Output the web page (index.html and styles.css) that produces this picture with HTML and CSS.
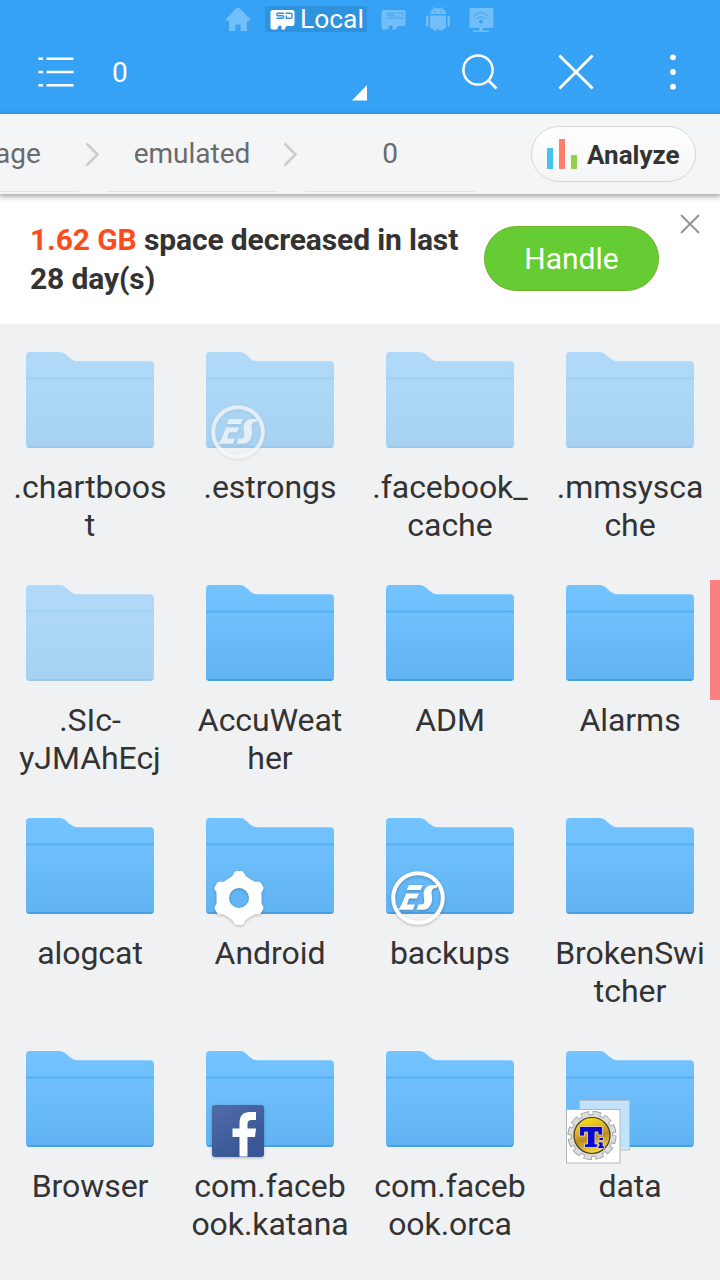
FILE: index.html
```html
<!DOCTYPE html>
<html lang="en">
<head>
<meta charset="utf-8">
<title>File explorer</title>
<link rel="stylesheet" href="styles.css">
</head>
<body>
<svg class="defs" width="0" height="0" aria-hidden="true">
  <defs>
    <linearGradient id="folder-fill" x1="0" y1="0" x2="0" y2="1">
      <stop offset="0" stop-color="#73c3ff"/><stop offset=".4" stop-color="#6dbefb"/><stop offset="1" stop-color="#60b3f1"/>
    </linearGradient>
    <clipPath id="folder-clip"><path d="M0 4Q0 0 4 0H34C41 0 43 9.300 52 9.300H124Q128 9.300 128 13.300V92Q128 96 124 96H4Q0 96 0 92Z"/></clipPath>
    <symbol id="folder" viewBox="0 0 128 96">
      <g clip-path="url(#folder-clip)">
        <rect width="128" height="96" fill="url(#folder-fill)"/>
        <rect y="25.500" width="128" height="2" fill="#56b0f0"/>
        <rect y="94" width="128" height="2" fill="#4a9fe0"/>
      </g>
    </symbol>
    <symbol id="sd" viewBox="0 0 25 21">
      <path fill="currentColor" stroke="none" d="M2.500 0H22.500Q24.500 0 24.500 2V13.500Q24.500 16 22.500 16H17Q16 16 15.500 17.500L14.500 19.500H11.500V16.500Q11.500 15.500 10.500 15.500H9.500Q8.500 15.500 8 17L7 19.500H2.500Q.5 19.500 .5 17.500V2Q.5 0 2.500 0Z"/>
      <path fill="none" stroke-width="1.400" d="M14 3.300H8Q6.800 3.300 6.800 4.500T8 5.700H12.500Q13.700 5.700 13.700 7T12.500 8.300H6.500M16.300 5.500V8.300H20.500Q22 8.300 22 7V4.700Q22 3.300 20.500 3.300H15.500"/>
    </symbol>
    <symbol id="es" viewBox="0 0 54 54">
      <circle cx="27" cy="27" r="24.800" fill="none" stroke="#fff" stroke-width="4"/>
      <g fill="#fff">
        <path d="M18 14H32L29.500 19H15.500ZM15 22.500H28L25.700 27.500H18L16 33.500H24L22 38.700H6.500Q10 36 12 30Z"/>
        <path d="M47 14L45.500 17Q42 16.500 41 19Q40 21.500 41 25C42 33 38 38.700 32 38.700H25.500L27.300 33.500H30C34 33.500 33.500 30 32.800 26C31.500 18 36 14 41 14Z"/>
      </g>
    </symbol>
  </defs>
</svg>
<div class="app">
  <header class="header">
    <nav class="tabs">
      <svg class="tab-icon home" width="26" height="26" viewBox="0 0 26 26"><path fill="currentColor" d="M13 .5Q14 .5 15 1.500L25 12Q25 14 23.500 14H22V24H15.500V17.500H10.500V24H4V14H2.500Q.8 14 1 12L11 1.500Q12 .5 13 .5Z"/></svg>
      <div class="tab-active"><svg class="sd" width="25" height="21"><use href="#sd"/></svg><span>Local</span></div>
      <svg class="tab-icon sd faded" width="25" height="21"><use href="#sd"/></svg>
      <svg class="tab-icon android" width="24" height="24" viewBox="0 0 24 24"><path fill="currentColor" fill-rule="evenodd" d="M4 7Q4.500 3 8 2L6.500.5L7.500 0L9.200 1.500Q12 .8 14.800 1.500L16.500 0L17.500.5L16 2Q19.500 3 20 7ZM8 4V5.500H9.500V4ZM14.500 4V5.500H16V4ZM4 8.500H20V20Q20 22 18 22H17V23.500H13V22H11V23.500H7V22H6Q4 22 4 20ZM0 10Q0 8.500 1.200 8.500T2.500 10V18Q2.500 19.500 1.200 19.500T0 18ZM21.500 10Q21.500 8.500 22.700 8.500T24 10V18Q24 19.500 22.700 19.500T21.500 18Z"/></svg>
      <svg class="tab-icon cast" width="25" height="25" viewBox="0 0 25 25"><path fill="currentColor" d="M2 0H23Q24.500 0 24.500 1.500V18.500Q24.500 20 23 20H14V22.500H20V24H4V22.500H10.500V20H2Q.5 20 .5 18.500V1.500Q.5 0 2 0Z"/><g fill="none" stroke="#4fadf6" stroke-width="1.500"><path d="M4.500 8.500Q12 1 19.500 8.500M7.500 11Q12 6.500 16.500 11"/></g><circle cx="12" cy="13.500" r="2" fill="#36a2f5"/></svg>
    </nav>
    <div class="toolbar">
      <svg class="menu" width="36" height="32" viewBox="0 0 36 32"><path stroke="#fff" stroke-width="2.600" d="M.5 2.700H5M8.500 2.700H35.500M.5 16H5M8.500 16H35.500M.5 29.300H5M8.500 29.300H35.500"/></svg>
      <span class="folder-title">0</span>
      <svg class="corner" width="16" height="16" viewBox="0 0 16 16"><path fill="#fff" d="M15 0V15.500H0Z"/></svg>
      <svg class="search" width="36" height="36" viewBox="0 0 36 36"><circle cx="16" cy="16" r="14.600" fill="none" stroke="#fff" stroke-width="2.500"/><path stroke="#fff" stroke-width="2.700" d="M26.500 26.500L34.500 34.500"/></svg>
      <svg class="close" width="36" height="36" viewBox="0 0 36 36"><path stroke="#fff" stroke-width="2.800" d="M1.400 1.400L34.600 34.600M34.600 1.400L1.400 34.600"/></svg>
      <svg class="more" width="8" height="36" viewBox="0 0 8 36"><g fill="#fff"><circle cx="4" cy="3.300" r="2.900"/><circle cx="4" cy="18" r="2.900"/><circle cx="4" cy="32.700" r="2.900"/></g></svg>
    </div>
  </header>

  <div class="path">
    <span class="crumb first">age</span>
    <svg class="sep" width="28" height="80" viewBox="0 0 28 80"><path fill="none" stroke="#cbcccd" stroke-width="2.600" d="M7.500 29.500L18.500 40.500L7.500 51.500"/></svg>
    <span class="crumb">emulated</span>
    <svg class="sep" width="28" height="80" viewBox="0 0 28 80"><path fill="none" stroke="#cbcccd" stroke-width="2.600" d="M7.500 29.500L18.500 40.500L7.500 51.500"/></svg>
    <span class="crumb">0</span>
    <button class="analyze">
      <svg width="30" height="30" viewBox="0 0 30 30"><rect y="9" width="6" height="21" rx=".8" fill="#46c2ee"/><rect x="12" width="6" height="30" rx=".8" fill="#ff806a"/><rect x="24" y="16" width="6" height="14" rx=".8" fill="#94ce4d"/></svg>
      <span class="analyze-label">Analyze</span>
    </button>
  </div>

  <section class="notice">
    <p class="notice-text"><span class="size">1.62 GB</span> space decreased in last<br>28 day(s)</p>
    <button class="handle">Handle</button>
    <svg class="dismiss" width="20" height="20" viewBox="0 0 20 20"><path stroke="#999" stroke-width="2.200" d="M1 1L19 19M19 1L1 19"/></svg>
  </section>

  <main class="grid">
    <div class="item hidden"><div class="icon"><svg class="folder"><use href="#folder"/></svg></div><span>.chartboos<br>t</span></div>
    <div class="item hidden"><div class="icon"><svg class="folder"><use href="#folder"/></svg><svg class="badge es"><use href="#es"/></svg></div><span>.estrongs</span></div>
    <div class="item hidden"><div class="icon"><svg class="folder"><use href="#folder"/></svg></div><span>.facebook_<br>cache</span></div>
    <div class="item hidden"><div class="icon"><svg class="folder"><use href="#folder"/></svg></div><span>.mmsysca<br>che</span></div>

    <div class="item hidden"><div class="icon"><svg class="folder"><use href="#folder"/></svg></div><span>.SIc-<br>yJMAhEcj</span></div>
    <div class="item"><div class="icon"><svg class="folder"><use href="#folder"/></svg></div><span>AccuWeat<br>her</span></div>
    <div class="item"><div class="icon"><svg class="folder"><use href="#folder"/></svg></div><span>ADM</span></div>
    <div class="item"><div class="icon"><svg class="folder"><use href="#folder"/></svg></div><span>Alarms</span></div>

    <div class="item"><div class="icon"><svg class="folder"><use href="#folder"/></svg></div><span>alogcat</span></div>
    <div class="item"><div class="icon"><svg class="folder"><use href="#folder"/></svg>
      <svg class="badge gear" viewBox="0 0 50 54"><path fill="#fff" fill-rule="evenodd" d="M22 0H28Q30 1 31 4L33 6L40 10.500Q42 11 44 10.500Q46 10.500 47 12L49.500 16.500Q50 18 48 20.500L47.500 22V32L48 33.500Q50 36 49.500 37.500L47 42Q46 43.500 44 43.500Q42 43 40 43.500L33 48L31 50Q30 53 28 54H22Q20 53 19 50L17 48L10 43.500Q8 43 6 43.500Q4 43.500 3 42L.5 37.500Q0 36 2 33.500L2.500 32V22L2 20.500Q0 18 .5 16.500L3 12Q4 10.500 6 10.500Q8 11 10 10.500L17 6L19 4Q20 1 22 0ZM25 17A10 10 0 1 0 25 37A10 10 0 1 0 25 17Z"/></svg></div><span>Android</span></div>
    <div class="item"><div class="icon"><svg class="folder"><use href="#folder"/></svg><svg class="badge es"><use href="#es"/></svg></div><span>backups</span></div>
    <div class="item"><div class="icon"><svg class="folder"><use href="#folder"/></svg></div><span>BrokenSwi<br>tcher</span></div>

    <div class="item"><div class="icon"><svg class="folder"><use href="#folder"/></svg></div><span>Browser</span></div>
    <div class="item"><div class="icon"><svg class="folder"><use href="#folder"/></svg>
      <svg class="badge fb" viewBox="0 0 52 52"><defs><linearGradient id="fb-fill" x1="0" y1="0" x2=".6" y2="1"><stop offset="0" stop-color="#506da8"/><stop offset="1" stop-color="#385594"/></linearGradient></defs><rect width="52" height="52" rx="3" fill="url(#fb-fill)"/><path fill="#fff" d="M27.500 51.500V32H20.500V23.500H27.500V18Q27.500 7 38 7H44V15H39.500Q35.500 15 35.500 19V23.500H44L43 32H35.500V51.500Z"/></svg></div><span>com.faceb<br>ook.katana</span></div>
    <div class="item"><div class="icon"><svg class="folder"><use href="#folder"/></svg></div><span>com.faceb<br>ook.orca</span></div>
    <div class="item"><div class="icon"><svg class="folder"><use href="#folder"/></svg>
      <svg class="badge ti" viewBox="0 0 64 64"><defs><linearGradient id="gold" x1="0" y1="0" x2=".3" y2="1"><stop offset="0" stop-color="#fff000"/><stop offset=".4" stop-color="#e0b52a"/><stop offset=".65" stop-color="#b98b22"/><stop offset="1" stop-color="#f0d040"/></linearGradient></defs>
        <rect x="13.500" y=".5" width="50" height="49.500" fill="#cce7fc" fill-opacity=".9" stroke="#b4bfc8"/>
        <rect x=".5" y="9.500" width="53.500" height="53.500" fill="#fff" stroke="#b4b7ba"/>
        <circle cx="26" cy="35.500" r="22" fill="none" stroke="#8a8a8a" stroke-width="5" stroke-dasharray="7.900 3.619"/>
        <circle cx="26" cy="35.500" r="20.900" fill="#dcdcdc" stroke="#8a8a8a" stroke-width=".8"/>
        <circle cx="26" cy="35.500" r="21.500" fill="none" stroke="#dcdcdc" stroke-width="4.600" stroke-dasharray="6.700 4.557" stroke-dashoffset="-.5"/>
        <circle cx="26" cy="35.500" r="18" fill="url(#gold)" stroke="#443d25" stroke-width="1.200"/>
        <path fill="#0a08d0" stroke="#eee0b0" stroke-width=".8" d="M13.500 26.500H36.500V35H32V32H29V44H32V47.500H18.500V44H21.500V32H18.500V36H13.500ZM33 37.500H37.500V40.500H33ZM32 42H37V46H38.500V48.500H31V46H33V44H32Z"/></svg></div><span>data</span></div>
    <div class="scroll-thumb"></div>
  </main>
</div>
</body>
</html>
```

FILE: styles.css
```css
* { box-sizing: border-box; }
body { margin: 0; font-family: Roboto, "Noto Sans", sans-serif; color: #333; }
button { font-family: inherit; padding: 0; margin: 0; }
svg { display: block; flex: none; }
.defs { position: absolute; }
.app { width: 720px; height: 1280px; overflow: hidden; background: #f0f1f3; display: flex; flex-direction: column; }

.header { height: 114px; background: #36a2f5; color: #fff; flex: none; }
.tabs { height: 38px; display: flex; align-items: flex-start; padding: 6px 0 0 225px; color: #72bef8; }
.home { margin-top: 1px; margin-right: 14px; }
.tab-active { width: 102px; height: 26px; background: #2e92df; color: #fff; display: flex; align-items: center; padding-left: 5px; gap: 5px; font-size: 26.400px; line-height: 26px; }
.tab-active .sd { margin-top: 2px; }
.sd { stroke: #2e92df; }
.faded { stroke: #4fadf6; margin: 4px 0 0 14px; }
.android { margin: 1px 0 0 20px; }
.cast { margin: 2px 0 0 19px; }
.toolbar { height: 68px; display: flex; align-items: center; padding-left: 38px; }
.folder-title { font-size: 28px; line-height: 34px; width: 16px; margin-left: 38px; padding-top: 2px; }
.corner { margin: 41px 94px 0 224px; }
.close { margin-left: 60px; }
.more { margin-left: 75px; }

.path { height: 80px; flex: none; display: flex; background: #f4f5f7; position: relative; z-index: 1; box-shadow: 0 2px 5px 1px rgba(0,0,0,.33); }
.crumb { width: 170px; height: 78px; border-bottom: 1px solid #e2e3e5; text-align: center; font-size: 28px; line-height: 79px; color: #6b6b6b; }
.first { width: 79px; text-align: left; text-indent: -5px; }
.analyze { width: 165px; height: 56px; margin: 12px 0 0 56px; border: 1px solid #d5d6d8; border-radius: 28px; background: linear-gradient(#fff, #f4f5f7); display: flex; align-items: center; gap: 10px; padding-left: 15px; font-size: 26px; font-weight: 700; color: #333; }
.analyze-label { padding-top: 2px; }

.notice { height: 130px; flex: none; background: #fff; display: flex; align-items: flex-start; padding: 26px 0 0 30px; }
.notice-text { margin: 0; width: 454px; font-size: 30px; letter-spacing: -.12px; line-height: 39px; font-weight: 700; white-space: nowrap; }
.size { color: #fc4c1d; }
.handle { width: 175px; height: 65px; margin-top: 6px; border: 1px solid #6fae28; border-radius: 33px; background: #66cc33; color: #fff; font-size: 30px; }
.dismiss { margin: -6px 0 0 21px; }

.grid { display: grid; grid-template-columns: repeat(4, 180px); grid-auto-rows: 233px; position: relative; }
.item { display: flex; flex-direction: column; align-items: center; padding-top: 28px; gap: 20px; font-size: 32px; letter-spacing: -.05px; line-height: 38px; text-align: center; }
.icon { position: relative; width: 128px; height: 96px; }
.folder { width: 128px; height: 96px; }
.hidden .icon { opacity: .5; }
.badge { position: absolute; filter: drop-shadow(0 1px 1.500px rgba(0,0,0,.25)); }
.es { width: 54px; height: 54px; left: 5px; top: 53px; }
.hidden .es { opacity: .75; }
.gear { width: 50px; height: 54px; left: 7.500px; top: 53px; }
.fb { width: 52px; height: 52px; left: 6px; top: 54px; }
.ti { width: 64px; height: 64px; left: 0; top: 49px; filter: none; }
.scroll-thumb { position: absolute; right: 0; top: 256px; width: 10px; height: 120px; background: #fa8082; }
```
